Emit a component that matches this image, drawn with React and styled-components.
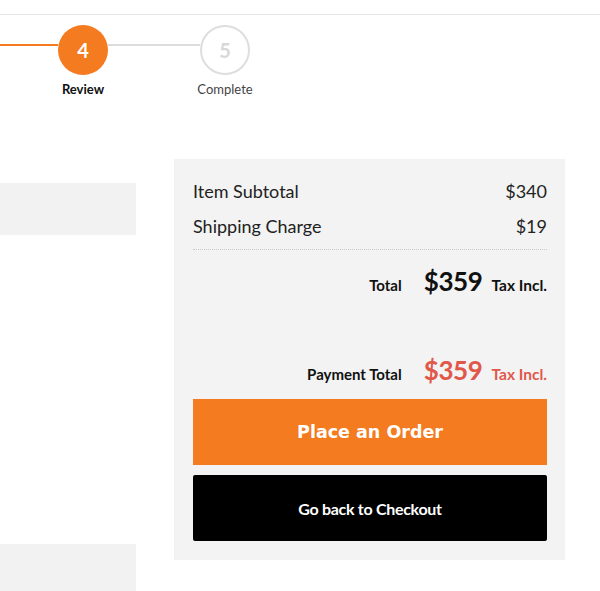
import React from "react";
import styled, { createGlobalStyle } from "styled-components";

const GlobalStyle = createGlobalStyle`
  html, body { margin: 0; padding: 0; background: #fff; }
  body { font-family: "Lato", "Noto Sans", sans-serif; color: #222; }
`;

const Page = styled.div`
  width: 600px;
  height: 591px;
  overflow: hidden;
  display: flex;
  flex-direction: column;
`;

const TopRule = styled.div`
  flex: none;
  margin-top: 14px;
  height: 1px;
  background: #e6e6e6;
`;

const Stepper = styled.div`
  flex: none;
  display: flex;
  align-items: flex-start;
  padding-top: 10px;
  height: 100px;
  box-sizing: border-box;
`;

const Connector = styled.div`
  width: ${(p) => p.$w}px;
  height: 2px;
  margin-top: 19px;
  background: ${(p) => (p.$done ? "#f47b20" : "#dcdcdc")};
`;

const Step = styled.div`
  width: 50px;
  display: flex;
  flex-direction: column;
  align-items: center;
`;

const Circle = styled.div`
  width: 50px;
  height: 50px;
  box-sizing: border-box;
  border-radius: 50%;
  display: flex;
  align-items: center;
  justify-content: center;
  font-family: "Lato", sans-serif;
  font-weight: 700;
  font-size: 20px;
  background: ${(p) => (p.$active ? "#f47b20" : "#fff")};
  color: ${(p) => (p.$active ? "#fff" : "#d8d8d8")};
  border: ${(p) => (p.$active ? "none" : "2px solid #dedede")};
`;

const StepLabel = styled.div`
  margin-top: 6px;
  white-space: nowrap;
  font-size: 13px;
  font-weight: ${(p) => (p.$active ? 700 : 400)};
  color: ${(p) => (p.$active ? "#111" : "#444")};
`;

const Body = styled.div`
  flex: none;
  display: flex;
  align-items: flex-start;
  margin-top: 44px;
  gap: 38px;
`;

const LeftCol = styled.div`
  width: 136px;
  display: flex;
  flex-direction: column;
  padding-top: 24px;
  gap: 309px;
`;

const GrayBlock = styled.div`
  height: ${(p) => p.$h}px;
  background: #f2f2f2;
`;

const Summary = styled.div`
  width: 391px;
  box-sizing: border-box;
  background: #f3f3f3;
  padding: 20px 18px 19px 19px;
  display: flex;
  flex-direction: column;
`;

const Line = styled.div`
  display: flex;
  justify-content: space-between;
  align-items: center;
  font-size: 18px;
  color: #222;
  height: 35px;
  line-height: 35px;
  margin-top: ${(p) => (p.$first ? "-5px" : "0")};
`;

const Divider = styled.div`
  border-top: 1px dotted #c8c8c8;
  margin-top: 5px;
`;

const TotalRow = styled.div`
  display: flex;
  justify-content: flex-end;
  align-items: baseline;
  margin-top: ${(p) => p.$mt}px;
  color: ${(p) => (p.$red ? "#e0584a" : "#111")};
`;

const TotalLabel = styled.span`
  font-size: 15px;
  font-weight: 700;
  color: #111;
  margin-right: 22px;
`;

const Amount = styled.span`
  font-size: 26px;
  font-weight: 700;
  margin-right: 9px;
  letter-spacing: -0.4px;
`;

const Tax = styled.span`
  font-size: 15.5px;
  font-weight: 700;
`;

const Button = styled.button`
  display: flex;
  align-items: center;
  justify-content: center;
  width: 100%;
  height: 66px;
  border: none;
  border-radius: ${(p) => (p.$dark ? "2px" : "0")};
  background: ${(p) => (p.$dark ? "#000" : "#f47b20")};
  color: #fff;
  font-weight: 700;
  cursor: pointer;
  margin-top: ${(p) => p.$mt}px;
  font-family: ${(p) =>
    p.$dark ? '"Lato", sans-serif' : '"DejaVu Sans", "Verdana", sans-serif'};
  font-size: ${(p) => (p.$dark ? "16px" : "17.5px")};
  letter-spacing: ${(p) => (p.$dark ? "-0.3px" : "0")};
`;

export default function App() {
  return (
    <Page>
      <GlobalStyle />
      <TopRule />
      <Stepper>
        <Connector $w={58} $done />
        <Step>
          <Circle $active>4</Circle>
          <StepLabel $active>Review</StepLabel>
        </Step>
        <Connector $w={92} />
        <Step>
          <Circle>5</Circle>
          <StepLabel>Complete</StepLabel>
        </Step>
      </Stepper>
      <Body>
        <LeftCol>
          <GrayBlock $h={52} />
          <GrayBlock $h={60} />
        </LeftCol>
        <Summary>
          <Line $first>
            <span>Item Subtotal</span>
            <span>$340</span>
          </Line>
          <Line>
            <span>Shipping Charge</span>
            <span>$19</span>
          </Line>
          <Divider />
          <TotalRow $mt={15}>
            <TotalLabel>Total</TotalLabel>
            <Amount>$359</Amount>
            <Tax>Tax Incl.</Tax>
          </TotalRow>
          <TotalRow $mt={57} $red>
            <TotalLabel>Payment Total</TotalLabel>
            <Amount>$359</Amount>
            <Tax>Tax Incl.</Tax>
          </TotalRow>
          <Button $mt={13}>Place an Order</Button>
          <Button $mt={10} $dark>
            Go back to Checkout
          </Button>
        </Summary>
      </Body>
    </Page>
  );
}
